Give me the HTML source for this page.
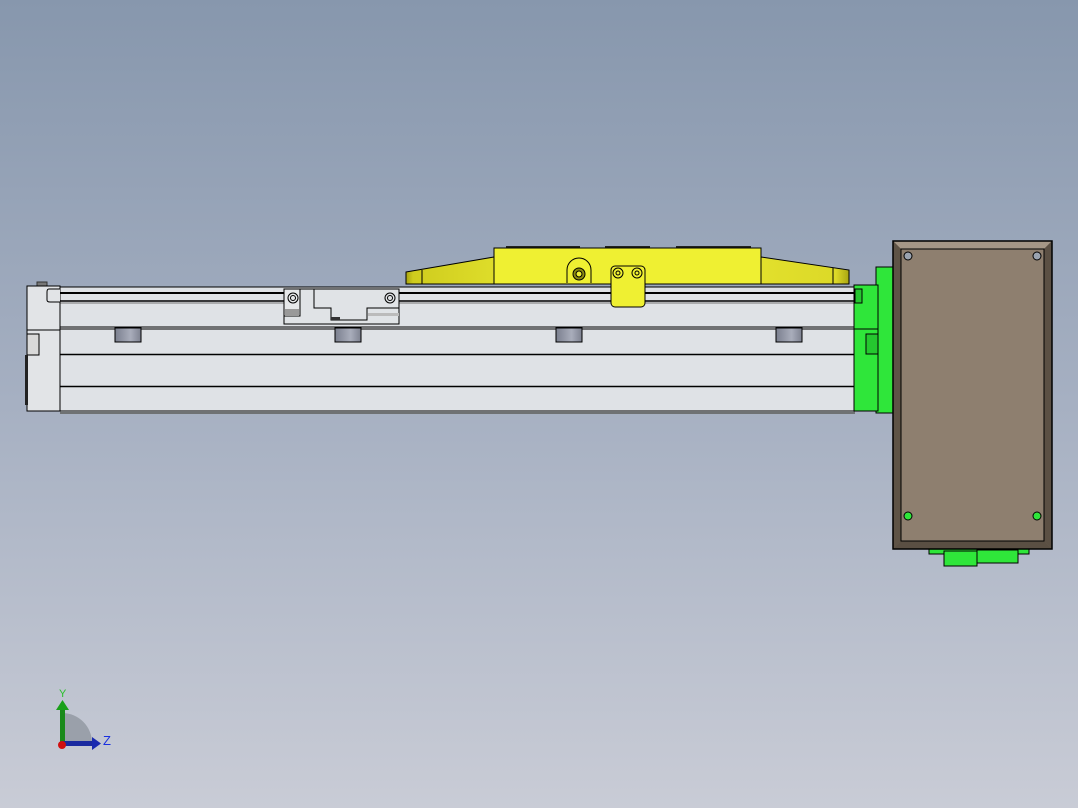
<!DOCTYPE html>
<html><head><style>
html,body{margin:0;padding:0}
body{width:1078px;height:808px;overflow:hidden;background:linear-gradient(#8797ad,#a6b0c2 50%,#c9ccd6);position:relative;font-family:"Liberation Sans",sans-serif}
</style></head><body>
<svg width="1078" height="808" style="position:absolute;left:0;top:0" xmlns="http://www.w3.org/2000/svg">
<defs>
<linearGradient id="pad" x1="0" x2="1"><stop offset="0" stop-color="#7a7f8e"/><stop offset=".6" stop-color="#a9adbb"/><stop offset="1" stop-color="#7d8190"/></linearGradient>
<linearGradient id="wedge" x1="0" x2="1"><stop offset="0" stop-color="#a8a410"/><stop offset=".08" stop-color="#cfcc1e"/><stop offset="1" stop-color="#dedd2a"/></linearGradient>
<linearGradient id="wedgeR" x1="0" x2="1"><stop offset="0" stop-color="#e2e02c"/><stop offset=".85" stop-color="#dcd928"/><stop offset="1" stop-color="#a9a512"/></linearGradient>
</defs>
<!-- yellow carriage -->
<path d="M406 272 L494 257 L494 284 L406 284 Z" fill="url(#wedge)" stroke="#000" stroke-width="1"/>
<line x1="422" y1="270" x2="422" y2="284" stroke="#000"/>
<path d="M761 257 L849 270 L849 284 L761 284 Z" fill="url(#wedgeR)" stroke="#000" stroke-width="1"/>
<line x1="833" y1="268" x2="833" y2="284" stroke="#000"/>
<rect x="506" y="246" width="74" height="3" fill="#222"/>
<rect x="605" y="246" width="45" height="3" fill="#222"/>
<rect x="676" y="246" width="75" height="3" fill="#222"/>
<rect x="494" y="248" width="267" height="36" fill="#eff032" stroke="#000"/>
<path d="M567 283 L567 270 A12 12 0 0 1 591 270 L591 283" fill="none" stroke="#000"/>
<circle cx="579" cy="274" r="6" fill="#8a8a10" stroke="#000"/>
<circle cx="579" cy="274" r="3" fill="#eff032" stroke="#000"/>
<!-- rail body -->
<rect x="60" y="287" width="795" height="124" fill="#dfe2e6" stroke="#000"/>
<rect x="60" y="411" width="795" height="3" fill="#6f7274"/>
<line x1="60" y1="293" x2="855" y2="293" stroke="#000" stroke-width="2"/>
<line x1="60" y1="301" x2="855" y2="301" stroke="#000" stroke-width="1.5"/>
<line x1="60" y1="303" x2="855" y2="303" stroke="#777" stroke-width="1"/>
<line x1="60" y1="327" x2="855" y2="327" stroke="#000"/>
<line x1="60" y1="329" x2="855" y2="329" stroke="#000"/>
<line x1="60" y1="354.5" x2="855" y2="354.5" stroke="#000" stroke-width="1.5"/>
<line x1="60" y1="386.5" x2="855" y2="386.5" stroke="#000" stroke-width="1.5"/>
<rect x="115" y="328" width="26" height="14" fill="url(#pad)" stroke="#000"/>
<rect x="335" y="328" width="26" height="14" fill="url(#pad)" stroke="#000"/>
<rect x="556" y="328" width="26" height="14" fill="url(#pad)" stroke="#000"/>
<rect x="776" y="328" width="26" height="14" fill="url(#pad)" stroke="#000"/>
<!-- end cap -->
<rect x="37" y="282" width="10" height="4" fill="#777" stroke="#333"/>
<rect x="27" y="286" width="33" height="125" fill="#e2e4e7" stroke="#000"/>
<path d="M60 289 L49 289 Q47 289 47 292 L47 300 Q47 302 50 302 L60 302" fill="#e2e4e7" stroke="#000"/>
<line x1="27" y1="330" x2="60" y2="330" stroke="#000"/>
<rect x="27" y="334" width="12" height="21" fill="#d9d9d9" stroke="#000"/>
<rect x="25" y="355" width="3" height="50" fill="#222"/>
<!-- bracket -->
<rect x="284" y="289" width="115" height="35" fill="#e0e3e6" stroke="#000"/>
<rect x="284" y="289" width="16" height="27" fill="#e6e8ea" stroke="#000"/>
<rect x="285" y="309" width="14" height="7" fill="#999"/>
<circle cx="293" cy="298" r="5" fill="none" stroke="#000"/><circle cx="293" cy="298" r="2.5" fill="none" stroke="#000"/>
<path d="M314 289 L314 308 L331 308 L331 320 L367 320 L367 308 L399 308" fill="none" stroke="#000"/>
<rect x="331" y="317" width="9" height="3" fill="#333"/>
<circle cx="390" cy="298" r="5" fill="none" stroke="#000"/><circle cx="390" cy="298" r="2.5" fill="none" stroke="#000"/>
<rect x="368" y="313" width="31" height="3" fill="#bbb"/>
<!-- yellow clamp -->
<rect x="611" y="266" width="34" height="41" rx="4" fill="#eff032" stroke="#000"/>
<circle cx="618" cy="273" r="5" fill="#eff032" stroke="#000"/><circle cx="618" cy="273" r="2" fill="none" stroke="#000"/>
<circle cx="637" cy="273" r="5" fill="#eff032" stroke="#000"/><circle cx="637" cy="273" r="2" fill="none" stroke="#000"/>
<!-- green adapter -->
<rect x="876" y="267" width="17" height="146" fill="#2fe63a" stroke="#000"/>
<rect x="854" y="285" width="24" height="126" fill="#2fe63a" stroke="#000"/>
<rect x="855" y="289" width="7" height="14" fill="#25c72f" stroke="#000"/>
<rect x="866" y="334" width="12" height="20" fill="#25c72f" stroke="#000"/>
<line x1="854" y1="329" x2="878" y2="329" stroke="#000"/>
<!-- motor bottom tabs -->
<rect x="929" y="548" width="100" height="6" fill="#2fe63a" stroke="#000"/>
<rect x="977" y="550" width="41" height="13" fill="#2fe63a" stroke="#000"/>
<rect x="944" y="551" width="33" height="15" fill="#2fe63a" stroke="#000"/>
<!-- motor -->
<rect x="893" y="241" width="159" height="308" fill="#6e6253" stroke="#000"/>
<path d="M893 241 L1052 241 L1044 249 L901 249 Z" fill="#a59787"/>
<path d="M893 549 L1052 549 L1044 541 L901 541 Z" fill="#5a4f43"/>
<path d="M893 241 L901 249 L901 541 L893 549 Z" fill="#5e5346"/>
<path d="M1052 241 L1044 249 L1044 541 L1052 549 Z" fill="#5b5044"/>
<rect x="901" y="249" width="143" height="292" fill="#8e7f6f" stroke="#000"/>
<rect x="893" y="241" width="159" height="308" fill="none" stroke="#000" stroke-width="1.5"/>
<g fill="#9aa3b0" stroke="#000"><circle cx="908" cy="256" r="4"/><circle cx="1037" cy="256" r="4"/></g>
<g fill="#2fe63a" stroke="#000"><circle cx="908" cy="516" r="4"/><circle cx="1037" cy="516" r="4"/></g>
<!-- triad -->
<path d="M62 743 L62 713 A30 30 0 0 1 92 743 Z" fill="#9aa0aa"/>
<rect x="60" y="708" width="5" height="36" fill="#1a8a1a"/>
<path d="M56 710 L62.5 700 L69 710 Z" fill="#1aa01a"/>
<rect x="62" y="741" width="32" height="5" fill="#1a2aa0"/>
<path d="M92 737 L101 743.5 L92 750 Z" fill="#1a2ab0"/>
<circle cx="62" cy="745" r="4" fill="#d01010"/>
<text x="59" y="697" font-size="11" fill="#2ac02a">Y</text>
<text x="103" y="745" font-size="13" fill="#1a30e0">Z</text>
</svg>
</body></html>
